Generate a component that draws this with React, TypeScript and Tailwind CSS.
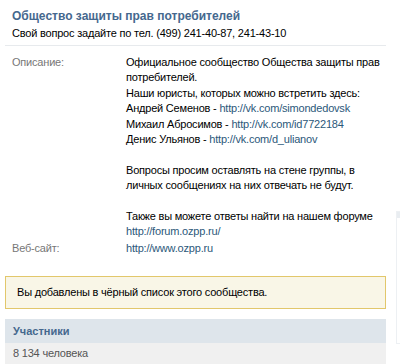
import React from 'react'

const FONT = { fontFamily: 'Tahoma, "Liberation Sans", Arial, sans-serif' }

function Link({ children }: { children: React.ReactNode }) {
  return <span className="text-[#2b587a]">{children}</span>
}

export default function App() {
  return (
    <div className="flex w-[400px] h-[364px] overflow-hidden bg-white text-[11px] leading-[15.4px] tracking-[-0.2px] text-black" style={FONT}>
      <div className="ml-[5px] w-[381px] shrink-0">
        {/* header */}
        <div className="px-[7px] pt-[8px] pb-[4px] border-b border-[#e7eaed]">
          <div className="text-[12px] leading-[16px] tracking-normal font-bold text-[#45688e]">Общество защиты прав потребителей</div>
          <div className="mt-[1px] leading-[16px]">Свой вопрос задайте по тел. (499) 241-40-87, 241-43-10</div>
        </div>

        {/* info */}
        <div className="px-[7px] pt-[9px] grid grid-cols-[114px_1fr] gap-y-[1px]">
          <div className="text-[#777]">Описание:</div>
          <div className="whitespace-nowrap">
            Официальное сообщество Общества защиты прав
            <br />потребителей.
            <br />Наши юристы, которых можно встретить здесь:
            <br />Андрей Семенов - <Link>http://vk.com/simondedovsk</Link>
            <br />Михаил Абросимов - <Link>http://vk.com/id7722184</Link>
            <br />Денис Ульянов - <Link>http://vk.com/d_ulianov</Link>
            <br />
            <br />Вопросы просим оставлять на стене группы, в
            <br />личных сообщениях на них отвечать не будут.
            <br />
            <br />Также вы можете ответы найти на нашем форуме
            <br /><Link>http://forum.ozpp.ru/</Link>
          </div>
          <div className="text-[#777]">Веб-сайт:</div>
          <div><Link>http://www.ozpp.ru</Link></div>
        </div>

        {/* blacklist notice */}
        <div className="mt-[20px] border border-[#e2c76b] bg-[#f9f6e7] px-[11px] py-[8px] leading-[15px]">
          Вы добавлены в чёрный список этого сообщества.
        </div>

        {/* members */}
        <div className="mt-[10px]">
          <div className="bg-[#dee5eb] px-[8px] py-[4px] font-bold tracking-normal text-[#45688e] leading-[16px]">Участники</div>
          <div className="bg-[#f0f0f0] px-[8px] pt-[2px] pb-[10px] text-[#555] leading-[16px]">8 134 человека</div>
        </div>
      </div>

      {/* sidebar edge */}
      <div className="ml-[10px] mt-[211px] h-[133px] w-[20px] shrink-0 border border-[#edf0f3]">
        <div className="h-[6px] bg-[#e9edf1]" />
      </div>
    </div>
  )
}
